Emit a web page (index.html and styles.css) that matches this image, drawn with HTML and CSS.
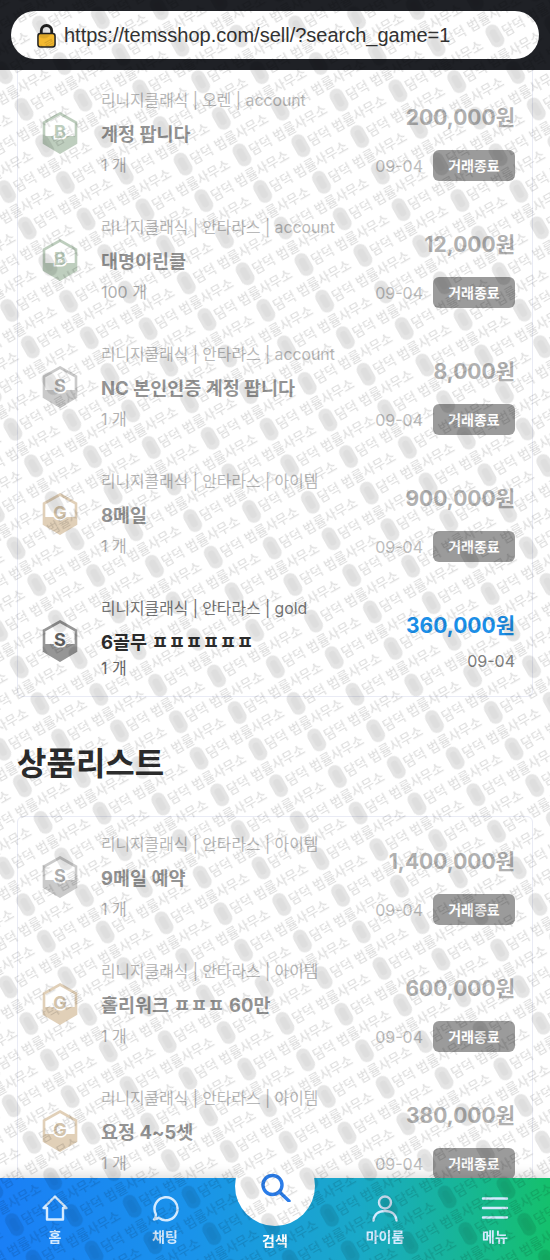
FILE: index.html
```html
<!DOCTYPE html>
<html lang="ko">
<head>
  <meta charset="UTF-8" />
  <meta name="viewport" content="width=device-width, initial-scale=1" />
  <title>상품리스트</title>
  <link rel="stylesheet" href="styles.css">
</head>
<body>

<!-- Shared grade badge -->
<svg class="defs" width="0" height="0">
  <defs>
    <clipPath id="hexClip"><path d="M18 1.500 34 10.500V31L18 40.500 2 31V10.500Z"/></clipPath>
    <symbol id="hex" viewBox="0 0 36 42">
      <path d="M18 1.500 34 10.500V31L18 40.500 2 31V10.500Z" fill="#fff"/>
      <rect x="0" y="24" width="36" height="18" fill="currentColor" clip-path="url(#hexClip)"/>
      <path d="M18 1.500 34 10.500V31L18 40.500 2 31V10.500Z" fill="none" stroke="currentColor" stroke-width="2.600"/>
    </symbol>
  </defs>
</svg>

<!-- Address bar -->
<header class="topbar">
  <div class="urlbar">
    <svg class="lock" viewBox="0 0 20 26" width="19" height="25">
      <path d="M4.500 12V8a5.500 5.500 0 0 1 11 0v4" fill="none" stroke="#222" stroke-width="3"/>
      <rect x="1" y="11" width="18" height="14" rx="2.500" fill="#f4b92f" stroke="#222" stroke-width="1.600"/>
    </svg>
    <span>https://temsshop.com/sell/?search_game=1</span>
  </div>
</header>

<main class="content">

  <div class="card card-cut">
    <div class="item item-sold">
      <div class="badge badge-b"><svg width="36" height="42"><use href="#hex"/></svg><b>B</b></div>
      <div class="info">
        <p class="cat">리니지클래식 | 오렌 | account</p>
        <p class="name">계정 팝니다</p>
        <p class="qty">1 개</p>
      </div>
      <div class="side">
        <p class="price">200,000원</p>
        <div class="meta"><span class="date">09-04</span><span class="closed">거래종료</span></div>
      </div>
    </div>

    <div class="item item-sold">
      <div class="badge badge-b"><svg width="36" height="42"><use href="#hex"/></svg><b>B</b></div>
      <div class="info">
        <p class="cat">리니지클래식 | 안타라스 | account</p>
        <p class="name">대명이린클</p>
        <p class="qty">100 개</p>
      </div>
      <div class="side">
        <p class="price">12,000원</p>
        <div class="meta"><span class="date">09-04</span><span class="closed">거래종료</span></div>
      </div>
    </div>

    <div class="item item-sold">
      <div class="badge badge-s"><svg width="36" height="42"><use href="#hex"/></svg><b>S</b></div>
      <div class="info">
        <p class="cat">리니지클래식 | 안타라스 | account</p>
        <p class="name">NC 본인인증 계정 팝니다</p>
        <p class="qty">1 개</p>
      </div>
      <div class="side">
        <p class="price">8,000원</p>
        <div class="meta"><span class="date">09-04</span><span class="closed">거래종료</span></div>
      </div>
    </div>

    <div class="item item-sold">
      <div class="badge badge-g"><svg width="36" height="42"><use href="#hex"/></svg><b>G</b></div>
      <div class="info">
        <p class="cat">리니지클래식 | 안타라스 | 아이템</p>
        <p class="name">8메일</p>
        <p class="qty">1 개</p>
      </div>
      <div class="side">
        <p class="price">900,000원</p>
        <div class="meta"><span class="date">09-04</span><span class="closed">거래종료</span></div>
      </div>
    </div>

    <div class="item item-open">
      <div class="badge badge-s"><svg width="36" height="42"><use href="#hex"/></svg><b>S</b></div>
      <div class="info">
        <p class="cat">리니지클래식 | 안타라스 | gold</p>
        <p class="name">6골무 ㅍㅍㅍㅍㅍㅍ</p>
        <p class="qty">1 개</p>
      </div>
      <div class="side">
        <p class="price">360,000원</p>
        <div class="meta"><span class="date">09-04</span></div>
      </div>
    </div>
  </div>

  <h2 class="title">상품리스트</h2>

  <div class="card">
    <div class="item item-sold">
      <div class="badge badge-s"><svg width="36" height="42"><use href="#hex"/></svg><b>S</b></div>
      <div class="info">
        <p class="cat">리니지클래식 | 안타라스 | 아이템</p>
        <p class="name">9메일 예약</p>
        <p class="qty">1 개</p>
      </div>
      <div class="side">
        <p class="price">1,400,000원</p>
        <div class="meta"><span class="date">09-04</span><span class="closed">거래종료</span></div>
      </div>
    </div>

    <div class="item item-sold">
      <div class="badge badge-g"><svg width="36" height="42"><use href="#hex"/></svg><b>G</b></div>
      <div class="info">
        <p class="cat">리니지클래식 | 안타라스 | 아이템</p>
        <p class="name">홀리워크 ㅍㅍㅍ 60만</p>
        <p class="qty">1 개</p>
      </div>
      <div class="side">
        <p class="price">600,000원</p>
        <div class="meta"><span class="date">09-04</span><span class="closed">거래종료</span></div>
      </div>
    </div>

    <div class="item item-sold">
      <div class="badge badge-g"><svg width="36" height="42"><use href="#hex"/></svg><b>G</b></div>
      <div class="info">
        <p class="cat">리니지클래식 | 안타라스 | 아이템</p>
        <p class="name">요정 4~5셋</p>
        <p class="qty">1 개</p>
      </div>
      <div class="side">
        <p class="price">380,000원</p>
        <div class="meta"><span class="date">09-04</span><span class="closed">거래종료</span></div>
      </div>
    </div>
  </div>
</main>

<!-- Bottom tabs -->
<nav class="tabs">
  <a class="tab">
    <svg viewBox="0 0 28 28" width="28" height="28"><path d="M14 2.500 2.500 14H6v11.500h16V14h3.500Z"/></svg>
    <span>홈</span>
  </a>
  <a class="tab">
    <svg viewBox="0 0 28 28" width="28" height="28"><path d="M3 25.500c2 0 3.500-.6 4.800-1.800A11.500 11.500 0 1 0 4.800 20c.3 2-.3 4-1.800 5.500Z"/></svg>
    <span>채팅</span>
  </a>
  <a class="tab tab-search">
    <span class="search-circle">
      <svg viewBox="0 0 32 32" width="32" height="32"><circle cx="13.500" cy="15" r="9.500"/><path d="M21 22.500 30 31"/></svg>
    </span>
    <span>검색</span>
  </a>
  <a class="tab">
    <svg viewBox="0 0 28 28" width="28" height="28"><circle cx="14" cy="8.500" r="6"/><path d="M2.500 26.500c.5-6 5-9.500 11.500-9.500s11 3.500 11.500 9.500"/></svg>
    <span>마이룸</span>
  </a>
  <a class="tab">
    <svg viewBox="0 0 28 28" width="28" height="28"><path d="M2 4.500h24M2 14h24M2 23.500h24"/></svg>
    <span>메뉴</span>
  </a>
</nav>

<!-- Watermark lies over the whole page -->
<svg class="watermark" width="550" height="1260">
  <defs>
    <g id="mark">
      <rect x="-7" y="-12" width="14" height="24" rx="7" class="mark-pill"/>
      <rect x="-3.500" y="-7" width="7" height="14" rx="3.500" class="mark-core"/>
      <text x="9" y="4.500" class="mark-text">담덕 법률사무소</text>
    </g>
    <pattern id="wm" width="111.500" height="42" patternUnits="userSpaceOnUse" patternTransform="translate(178.300 721.700) rotate(-29.500) translate(-10 -14)">
      <use href="#mark" x="10" y="14"/>
      <use href="#mark" x="65.750" y="35"/>
      <use href="#mark" x="-45.750" y="35"/>
      <use href="#mark" x="65.750" y="-7"/>
      <use href="#mark" x="-45.750" y="-7"/>
    </pattern>
  </defs>
  <rect width="550" height="1260" fill="url(#wm)"/>
</svg>

</body>
</html>
```

FILE: styles.css
```css
* {
  box-sizing: border-box;
}
html, body {
  margin: 0;
  height: 1260px;
  overflow: hidden;
}
body {
  font-family: Inter, "Noto Sans CJK KR", sans-serif;
  background: #fff;
  color: #2c2c2c;
}
p {
  margin: 0;
}
.defs {
  position: absolute;
}

/* address bar */
.topbar {
  height: 70px;
  background: #1f2126;
  padding: 11px 11px 0;
}
.urlbar {
  height: 48px;
  background: #fff;
  border-radius: 24px;
  display: flex;
  align-items: center;
  gap: 8px;
  padding-left: 26px;
  font-family: "Liberation Sans", Arial, sans-serif;
  font-size: 20px;
  color: #333;
}

/* list */
.content {
  padding: 0 17px;
}
.card {
  border: 1px solid #e9ebf5;
  border-radius: 6px;
  padding: 20px 17px 7px 24px;
  display: flex;
  flex-direction: column;
  gap: 39px;
}
.card-cut {
  border-top: none;
  border-radius: 0 0 6px 6px;
  padding-top: 23px;
}
.item {
  display: flex;
  height: 88px;
}
.item-sold {
  opacity: 0.5;
}
.badge {
  position: relative;
  width: 36px;
  height: 42px;
  margin-top: 19px;
  margin-right: 23px;
  flex: none;
}
.badge svg {
  display: block;
}
.badge b {
  position: absolute;
  inset: 0;
  text-align: center;
  font-size: 18px;
  line-height: 40px;
  -webkit-text-stroke: 3px #fff;
  paint-order: stroke fill;
}
.badge-b { color: #7f9f7f; }
.badge-s { color: #969696; }
.badge-g { color: #c4a273; }
.badge-s b { color: #5f5f5f; }
.badge-g b { color: #a98a5c; }

.info {
  flex: 1;
  display: flex;
  flex-direction: column;
  gap: 9px;
}
.cat {
  font-size: 15.800px;
  line-height: 16px;
  color: #757575;
}
.name {
  margin-top: 7px;
  font-size: 18.500px;
  line-height: 18px;
  font-weight: 700;
  color: #2c2c2c;
}
.qty {
  margin-top: 5px;
  font-size: 16px;
  line-height: 16px;
  color: #666;
}
.item-open .qty {
  margin-top: 0;
}

.side {
  display: flex;
  flex-direction: column;
  align-items: flex-end;
}
.price {
  margin-top: 12px;
  font-size: 21px;
  line-height: 26px;
  font-weight: 700;
  color: #666;
}
.item-open .price {
  color: #1b8fe8;
}
.meta {
  margin-top: 19px;
  display: flex;
  align-items: center;
  gap: 10px;
}
.item-open .meta {
  margin-top: 12px;
}
.date {
  font-size: 16px;
  color: #808080;
}
.closed {
  width: 82px;
  height: 31px;
  background: #3a3a3a;
  border-radius: 6px;
  color: #fff;
  font-size: 14px;
  font-weight: 700;
  line-height: 31px;
  text-align: center;
}

.title {
  margin: 47px 0 32px;
  font-size: 32px;
  line-height: 40px;
  font-weight: 700;
}

/* bottom tabs */
.tabs {
  position: fixed;
  left: 0;
  right: 0;
  bottom: 0;
  height: 82px;
  background: linear-gradient(90deg, #1a7ff6 0%, #1a93ea 35%, #1aa9c8 65%, #15c06c 100%);
  box-shadow: 0 -4px 10px rgba(0,0,0,0.12);
  display: grid;
  grid-template-columns: repeat(5, 110px);
}
.tab {
  display: flex;
  flex-direction: column;
  align-items: center;
  gap: 4px;
  padding-top: 16px;
  font-size: 14px;
  font-weight: 700;
  color: #d5ebff;
}
.tab svg {
  fill: none;
  stroke: #d5ebff;
  stroke-width: 2.400;
  stroke-linejoin: round;
  stroke-linecap: round;
}
.tab-search {
  color: #fff;
  padding-top: 52px;
  position: relative;
}
.search-circle {
  position: absolute;
  left: 15px;
  top: -32px;
  width: 80px;
  height: 80px;
  border-radius: 50%;
  background: #fff;
  display: flex;
  align-items: center;
  justify-content: center;
}
.search-circle svg {
  stroke: #2b7de9;
  stroke-width: 3.400;
}

/* watermark */
.watermark {
  position: fixed;
  left: 0;
  top: 0;
  pointer-events: none;
}
.mark-pill {
  fill: rgba(0,0,0,0.1);
}
.mark-core {
  fill: rgba(0,0,0,0.03);
}
.mark-text {
  font-family: "Noto Sans CJK KR", sans-serif;
  font-size: 13px;
  font-weight: 500;
  fill: rgba(0,0,0,0.13);
}
```
